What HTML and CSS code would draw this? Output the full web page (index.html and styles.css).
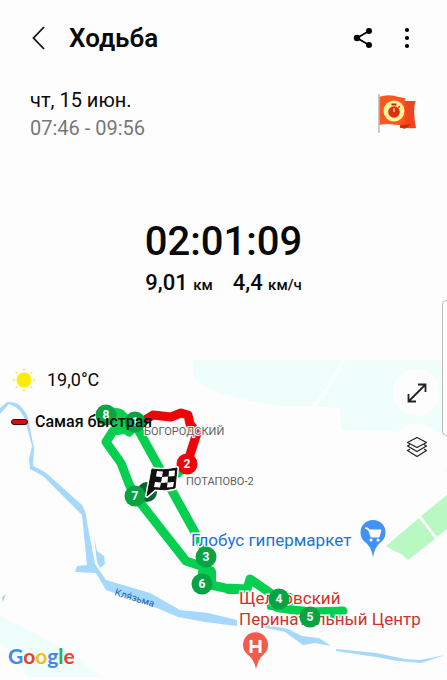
FILE: index.html
```
<!DOCTYPE html>
<html lang="ru">
<head>
<meta charset="utf-8">
<meta name="viewport" content="width=device-width, initial-scale=1">
<title>Ходьба</title>
<link rel="stylesheet" href="styles.css">
</head>
<body>
<header class="bar">
  <button class="icon-button back" aria-label="Назад">
    <svg width="16" height="26" viewBox="0 0 16 26"><path d="M13 2 2.500 13 13 24" fill="none" stroke="#111" stroke-width="1.800"/></svg>
  </button>
  <h1 class="title">Ходьба</h1>
  <button class="icon-button" aria-label="Поделиться">
    <svg width="20" height="22" viewBox="0 0 20 22"><path d="M16 4 4 11l12 7" fill="none" stroke="#000" stroke-width="1.800"/><circle cx="16" cy="4" r="3"/><circle cx="4" cy="11" r="3.200"/><circle cx="16" cy="18" r="3"/></svg>
  </button>
  <button class="icon-button" aria-label="Ещё">
    <svg width="6" height="22" viewBox="0 0 6 22"><circle cx="3" cy="3" r="2.100"/><circle cx="3" cy="11" r="2.100"/><circle cx="3" cy="19" r="2.100"/></svg>
  </button>
</header>
<main class="workout">
  <section class="when">
    <div>
      <p class="date">чт, 15 июн.</p>
      <p class="hours">07:46 - 09:56</p>
    </div>
    <svg class="flag" width="40" height="42" viewBox="0 0 40 42">
      <path d="M23 8h15.500q-3 9 .5 27-8 .8-16-1z" fill="#f0441c"/>
      <path d="M23 32.500l12-1.500-7 4.800-5-1z" fill="#c92c0d"/>
      <path d="M2 4q8-3 16-1t10 2v26q-6 1.500-12 .5T2 32z" fill="#ff5520"/>
      <path d="M2 1v39" stroke="#b9b9b9" stroke-width="1.500"/>
      <circle cx="17" cy="18" r="10.500" fill="#fff197"/>
      <circle cx="17" cy="19" r="5.800" fill="#dd2d13"/>
      <path d="M14.500 11.500h5M21.500 13.500l1 1" stroke="#bd2817" stroke-width="1.800"/>
      <path d="M17 15v4" stroke="#fff197" stroke-width="1.200"/>
    </svg>
  </section>
  <section class="summary">
    <p class="duration">02:01:09</p>
    <div class="metrics">
      <p class="metric">9,01 <span class="unit">км</span></p>
      <p class="metric">4,4 <span class="unit">км/ч</span></p>
    </div>
  </section>
  <section class="map" aria-label="Карта маршрута">
    <svg class="canvas" viewBox="0 360 447 320" preserveAspectRatio="xMidYMin slice">
      <g fill="#effdfb">
        <path d="M194 360H447V433L341 430 340 408 305 406 280 406Q220 397 199 383 190 371 194 360z"/>
        <path d="M0 616 52 642 103 677H27L16 655 0 645zM443 470l4-4v8z"/>
      </g>
      <path d="M344 360Q331 386 311 410" fill="none" stroke="#fafffe" stroke-width="4"/>
      <g fill="#b9f8c3">
        <path d="M386 546 419 518 435 539 408 560 400 553 394 551z"/>
        <path d="M421 516 447 495V529L437 537z"/>
      </g>
      <g fill="#a5d8fb">
        <path d="M0 408 7 402Q18 401 22 408 29 416 29 424L34 448 33 466 45 472 82 505Q86 511 87 522L95 564 106 580 150 593 180 610 208 613 237 620 237 626 205 622 178 617 152 606 120 595 106 590 96 573 75 572 77 566 87 565 82 515 71 504 43 476 30 469 29 459 32 446 26 423Q22 408 9 404L0 414z"/>
        <path d="M94 537 97 551 104 556 105 564 100 568 97 562z"/>
        <path d="M2 597 6 594 3 602z"/>
        <path d="M262 624 288 629 302 636 319 638 331 646 315 643 303 645 285 632 262 627z"/>
        <path d="M336 649 376 653 405 659 420 660 445 655 421 663 398 661 376 657 336 651z"/>
      </g>
      <text class="river" transform="translate(114 595) rotate(17)">Кля́зьма</text>
      <g class="route">
        <path d="M187 464 178 473"/>
        <path d="M107 415Q120 409 124 418L134 422 208 556M107 415 129 432 138 423M129 429 113 431 106 442 121 463 129 484 135 496 186 561 204 567 211 571 202 583 225 588 247 589 250 579 276 597Q270 607 280 608L310 612 343 611M310 612 340 619"/>
        <path class="block" d="M201 572h12v14h-12zM228 588h12v3h-12zM270 596h20v11h-20z"/>
        <path class="fast" d="M145 420 153 415 171 417 181 413 188 415 190 424 197 433 187 464"/>
      </g>
      <text class="place" x="144" y="435">БОГОРОДСКИЙ</text>
      <text class="place" x="186" y="485">ПОТАПОВО-2</text>
      <text class="poi shop" x="191" y="546">Глобус гипермаркет</text>
      <text class="poi clinic" x="239" y="604">Щелковский</text>
      <text class="poi clinic" x="239" y="625">Перинатальный Центр</text>
      <circle cx="147" cy="492" r="10" fill="#09642e"/>
      <g class="stops">
        <circle cx="106" cy="415" r="10.500"/><text x="106" y="419">8</text>
        <circle cx="135" cy="422" r="10.500"/><text x="135" y="426">1</text>
        <circle class="fast-stop" cx="187" cy="464" r="10.500"/><text x="187" y="468">2</text>
        <circle cx="135" cy="496" r="10.500"/><text x="135" y="500">7</text>
        <circle cx="206" cy="557" r="10.500"/><text x="206" y="561">3</text>
        <circle cx="202" cy="584" r="10.500"/><text x="202" y="588">6</text>
        <circle cx="279" cy="599" r="10.500"/><text x="279" y="603">4</text>
        <circle cx="310" cy="617" r="10.500"/><text x="310" y="621">5</text>
      </g>
      <g>
        <path d="M152 469Q163 471 177 468L175 488Q165 491 155 489L147 496z" fill="#111" stroke="#fff" stroke-width="4" stroke-linejoin="round"/>
        <path d="M152 469Q163 471 177 468L175 488Q165 491 155 489L147 496z" fill="#111" stroke="#111" stroke-width="1"/>
        <path d="M157 471l6 .5-1 5.500-6-.5zM169 471l6-.5-.5 5.500-6 .5zM162 477l6-.5-.5 6-6.500.5zM155 482l6 .5-1 5-6-.5zM167.500 482.500l6.500-.5-1 5-6 .5z" fill="#fff"/>
      </g>
      <path d="M373 557Q371 546 365 542A12.500 12.500 0 1 1 381 542Q375 546 373 557z" fill="#4291f6"/>
      <path d="M365 528h3l3 9h8l2-7h-12z" fill="#fff" stroke="#fff" stroke-width="1"/>
      <circle cx="371" cy="540" r="1.500" fill="#fff"/><circle cx="378" cy="540" r="1.500" fill="#fff"/>
      <path d="M256 669Q254 659 247 654A12.500 12.500 0 1 1 264 654Q258 659 256 669z" fill="#f45b4d"/>
      <path d="M251 640v13M260 640v13M251 646.500h9" stroke="#fff" stroke-width="3"/>
    </svg>
    <div class="legend">
      <p class="weather">
        <svg width="26" height="26" viewBox="0 0 26 26"><circle cx="13" cy="13" r="7.500" fill="#ffeb0a"/><g fill="#ffe936"><circle cx="13" cy="2.500" r="1"/><circle cx="13" cy="23.500" r="1"/><circle cx="2.500" cy="13" r="1"/><circle cx="23.500" cy="13" r="1"/><circle cx="5.500" cy="5.500" r="1"/><circle cx="20.500" cy="5.500" r="1"/><circle cx="5.500" cy="20.500" r="1"/><circle cx="20.500" cy="20.500" r="1"/></g></svg>
        19,0°C
      </p>
      <p class="fastest"><span class="swatch"></span>Самая быстрая</p>
    </div>
    <div class="controls">
      <button class="round" aria-label="Развернуть карту">
        <svg width="20" height="20" viewBox="0 0 20 20"><path d="M2 18 18 2M11 1.500h7.500V9M1.500 11v7.500H9" fill="none" stroke="#222" stroke-width="1.800"/></svg>
      </button>
      <button class="round" aria-label="Слои карты">
        <svg width="22" height="22" viewBox="0 0 22 22"><g fill="none" stroke="#222" stroke-width="1.300" stroke-linejoin="round"><path d="M11 1.500 20.500 6.500 11 11.500 1.500 6.500z"/><path d="M4 8.500 1.500 10 11 15.500l9.500-5.500L18 8.500"/><path d="M4 13 1.500 14.500 11 20.500l9.500-6L18 13"/></g></svg>
      </button>
    </div>
    <p class="google"><span class="b">G</span><span class="r">o</span><span class="y">o</span><span class="b">g</span><span class="g">l</span><span class="r">e</span></p>
  </section>
</main>
<div class="edge-handle"></div>
</body>
</html>
```

FILE: styles.css
```
* { box-sizing: border-box; }

body {
  margin: 0;
  min-height: 100vh;
  display: flex;
  flex-direction: column;
  background: #fdfdfd;
  color: #090909;
  font-family: Roboto, sans-serif;
  overflow-x: hidden;
}

p, h1 { margin: 0; }
svg { display: block; }

button {
  border: 0;
  padding: 0;
  background: none;
}

.bar {
  display: flex;
  align-items: center;
  gap: 22px;
  height: 76px;
  padding: 0 37px 0 31px;
}

.icon-button {
  display: flex;
  align-items: center;
  justify-content: center;
  min-width: 6px;
  height: 40px;
}

.bar .icon-button:last-child { margin-left: 9px; }

.title {
  flex: 1;
  font-size: 26px;
  line-height: 32px;
  font-weight: 600;
}

.workout {
  flex: 1;
  display: flex;
  flex-direction: column;
}

.when {
  display: flex;
  justify-content: space-between;
  align-items: center;
  padding: 10px 30px 0;
}

.date, .hours {
  font-size: 20px;
  line-height: 28px;
}

.hours { color: #777; }

.summary {
  display: flex;
  flex-direction: column;
  align-items: center;
  padding: 74px 0 60px;
}

.duration {
  font-size: 40px;
  line-height: 52px;
  font-weight: 500;
}

.metrics {
  display: flex;
  gap: 20px;
}

.metric {
  font-size: 22px;
  line-height: 30px;
  font-weight: 500;
}

.unit { font-size: 15px; }

.map {
  position: relative;
  flex: 1;
}

.canvas { width: 100%; }

.route path {
  fill: none;
  stroke: #04cf4f;
  stroke-width: 9px;
  stroke-linejoin: round;
  stroke-linecap: round;
}

.route .block {
  fill: #04cf4f;
  stroke-width: 6px;
}

.route .fast { stroke: #ee0509; }

.place {
  font-size: 11px;
  fill: #5d5d61;
  stroke: #fff;
  stroke-width: 2px;
  paint-order: stroke;
}

.poi {
  font-size: 17px;
  stroke: #fff;
  stroke-width: 3px;
  paint-order: stroke;
}

.shop { fill: #1a73d8; }
.clinic { fill: #d3302c; }

.river {
  font-size: 10px;
  fill: #1666b8;
}

.stops circle { fill: #0aa344; }
.stops .fast-stop { fill: #ee0509; }

.stops text {
  fill: #fff;
  font-size: 12px;
  font-weight: 700;
  text-anchor: middle;
}

.legend {
  position: absolute;
  top: 7px;
  left: 11px;
}

.weather, .fastest {
  display: flex;
  align-items: center;
}

.weather {
  gap: 10px;
  font-size: 18px;
  line-height: 26px;
}

.fastest {
  gap: 7px;
  margin-top: 16px;
  font-size: 16px;
  line-height: 26px;
  font-weight: 500;
}

.swatch {
  width: 17px;
  height: 6px;
  border: 1px solid #3d0808;
  border-radius: 3px;
  background: #e1080c;
}

.controls {
  position: absolute;
  top: 9px;
  right: 7px;
  display: flex;
  flex-direction: column;
  gap: 7px;
}

.round {
  display: flex;
  align-items: center;
  justify-content: center;
  width: 47px;
  height: 47px;
  border-radius: 50%;
  background: #fdfdfd;
}

.google {
  position: absolute;
  left: 8px;
  bottom: 12px;
  font-family: Lato, sans-serif;
  font-size: 21px;
  line-height: 24px;
  font-weight: 700;
}

.b { color: #4587ed; }
.r { color: #e64234; }
.y { color: #f8bd16; }
.g { color: #34a853; }

.edge-handle {
  position: absolute;
  top: 300px;
  right: 0;
  width: 5px;
  height: 136px;
  border: 1px solid #bbb;
  border-right: 0;
  border-radius: 5px 0 0 5px;
  background: #fdfdfd;
}
```
